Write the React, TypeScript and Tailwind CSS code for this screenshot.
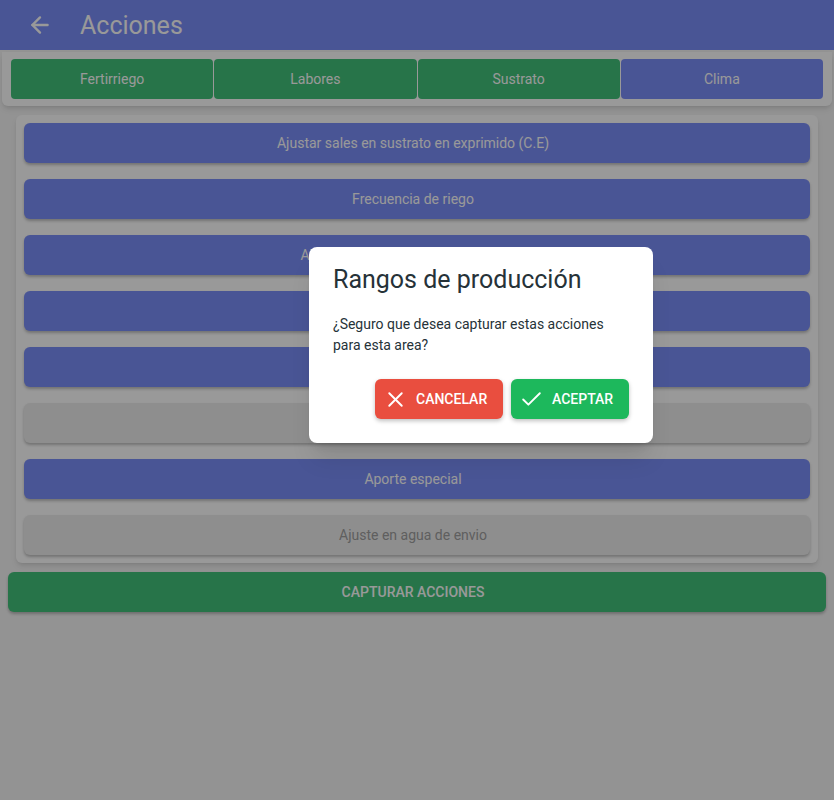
import { ArrowLeft, X, Check } from "lucide-react";

const tabs = [
  { label: "Fertirriego", active: false },
  { label: "Labores", active: false },
  { label: "Sustrato", active: false },
  { label: "Clima", active: true },
];

const acciones = [
  { label: "Ajustar sales en sustrato en exprimido (C.E)", enabled: true },
  { label: "Frecuencia de riego", enabled: true },
  { label: "Ajustar pH en solución de riego (pH)", enabled: true },
  { label: "Volumen de riego", enabled: true },
  { label: "Drenaje", enabled: true },
  { label: "Lavado de sustrato", enabled: false },
  { label: "Aporte especial", enabled: true },
  { label: "Ajuste en agua de envio", enabled: false },
];

export default function App() {
  return (
    <div className="relative min-h-[800px] w-full bg-[#f5f5f5] font-['Roboto',sans-serif] overflow-hidden">
      {/* Toolbar */}
      <header className="h-[50px] flex items-center bg-[#7b8ef8] text-white pl-[27px]">
        <ArrowLeft size={26} strokeWidth={2.2} />
        <h1 className="ml-[27px] text-[25px] leading-none">Acciones</h1>
      </header>

      {/* Tabs */}
      <div className="mx-[2px] mt-[2px] bg-white rounded-b-[6px] shadow-md px-[9px] pt-[7px] pb-[7px] flex gap-px">
        {tabs.map((t) => (
          <button
            key={t.label}
            className={`flex-1 h-10 rounded-[4px] text-[14px] text-white ${
              t.active ? "bg-[#7b8ef8]" : "bg-[#41c27b]"
            }`}
          >
            {t.label}
          </button>
        ))}
      </div>

      {/* Actions list */}
      <div className="mx-4 mt-[9px] bg-white rounded-[6px] shadow-md p-2 flex flex-col gap-4">
        {acciones.map((a) => (
          <button
            key={a.label}
            className={`h-10 pr-2 rounded-[6px] text-[14px] shadow-[0_2px_3px_rgba(0,0,0,0.25)] ${
              a.enabled ? "bg-[#7b8ef8] text-white" : "bg-[#ededed] text-[#9e9e9e]"
            }`}
          >
            {a.label}
          </button>
        ))}
      </div>

      <div className="px-2 mt-[9px]">
        <button className="w-full h-10 pr-2 rounded-[6px] bg-[#41c27b] text-white text-[14px] font-medium uppercase shadow-[0_2px_3px_rgba(0,0,0,0.25)]">
          Capturar acciones
        </button>
      </div>

      {/* Overlay */}
      <div className="absolute inset-0 bg-black/40" />

      {/* Dialog */}
      <div className="absolute left-[309px] top-[247px] w-[344px] h-[196px] bg-white rounded-[8px] shadow-xl px-6 pt-[17px] pb-6 flex flex-col">
        <h2 className="text-[25px] leading-8 text-[#263238]">Rangos de producción</h2>
        <p className="mt-[18px] text-[14px] leading-[21px] text-[#263238] pr-4">
          ¿Seguro que desea capturar estas acciones para esta area?
        </p>
        <div className="mt-auto flex justify-end gap-2">
          <button className="h-10 w-32 pl-2 rounded-[6px] bg-[#e94e3f] text-white text-[14px] font-medium flex items-center gap-2 shadow-[0_2px_4px_rgba(0,0,0,0.25)]">
            <X size={25} strokeWidth={1.8} />
            CANCELAR
          </button>
          <button className="h-10 w-[118px] pl-2 rounded-[6px] bg-[#1db85c] text-white text-[14px] font-medium flex items-center gap-2 shadow-[0_2px_4px_rgba(0,0,0,0.25)]">
            <Check size={25} strokeWidth={1.8} />
            ACEPTAR
          </button>
        </div>
      </div>
    </div>
  );
}
